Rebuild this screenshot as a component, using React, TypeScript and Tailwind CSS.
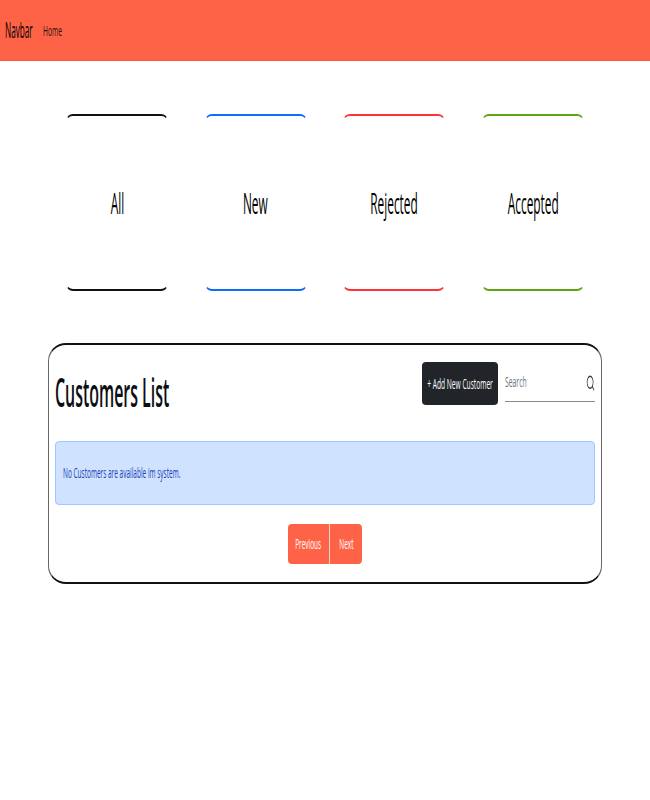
import { Search } from "lucide-react";

const cards = [
  { label: "All", color: "border-y-[#111111]" },
  { label: "New", color: "border-y-[#0d6efd]" },
  { label: "Rejected", color: "border-y-[#ff3333]" },
  { label: "Accepted", color: "border-y-[#5fa50f]" },
];

export default function App() {
  return (
    <div className="min-h-[800px] bg-white font-['Open_Sans',sans-serif] text-black">
      {/* Navbar */}
      <nav className="flex h-[61px] items-center border-b border-[#ff5533] bg-[#ff6347] pl-[5px]">
        <span className="inline-block w-[28px] origin-left scale-x-[0.39] text-[21px] leading-none whitespace-nowrap">Navbar</span>
        <span className="ml-[10px] inline-block w-[18px] origin-left scale-x-[0.446] text-[15px] leading-none whitespace-nowrap text-[#2a1410]">Home</span>
      </nav>

      {/* Status cards */}
      <div className="mt-[53px] grid grid-cols-4 gap-x-[36.5px] px-[66px]">
        {cards.map((card) => (
          <div
            key={card.label}
            className={`flex h-[177px] items-center justify-center rounded-[7px] border-x border-y-[2px] border-x-transparent ${card.color}`}
          >
            <span className="inline-block scale-x-[0.41] text-[29px] leading-none whitespace-nowrap">{card.label}</span>
          </div>
        ))}
      </div>

      {/* Customers panel */}
      <div className="mx-[48px] mt-[52px] h-[241px] rounded-[18px] border-x border-y-[2px] border-x-[#666666] border-y-[#111111] px-[6px]">
        <div className="flex h-[59px] items-start justify-between">
          <h1 className="mt-[26px] origin-left scale-x-[0.398] text-[40px] leading-[42px] font-semibold whitespace-nowrap text-[#0c0f14]">Customers List</h1>
          <div className="flex">
            <button className="mt-[17px] flex h-[43px] w-[76px] items-center justify-center rounded-[4px] bg-[#212529] text-white">
              <span className="inline-block scale-x-[0.443] text-[15px] leading-none whitespace-nowrap">+ Add New Customer</span>
            </button>
            <div className="mt-[17px] ml-[7px] flex h-[40px] w-[90px] items-center justify-between border-b border-[#8a8a8a] pr-0">
              <span className="inline-block w-[22px] origin-left scale-x-[0.487] text-[14px] leading-none whitespace-nowrap text-[#6c7380]">Search</span>
              <Search className="mt-[2px] h-[18px] w-[9px] text-[#333333]" strokeWidth={1.8} preserveAspectRatio="none" />
            </div>
          </div>
        </div>

        <div className="mt-[37px] flex h-[64px] items-center rounded-[4px] border border-[#a0c6ff] bg-[#cfe2ff] px-[7px]">
          <span className="inline-block origin-left scale-x-[0.464] text-[14px] leading-none whitespace-nowrap text-[#1a3fb8]">No Customers are available im system.</span>
        </div>

        <div className="mt-[19px] flex justify-center">
          <button className="flex h-[40px] w-[42px] items-center justify-center rounded-l-[4px] border-r border-[#f3d5cf] bg-[#ff6347] text-white">
            <span className="inline-block scale-x-[0.46] text-[14px] leading-none">Previous</span>
          </button>
          <button className="flex h-[40px] w-[32px] items-center justify-center rounded-r-[4px] bg-[#ff6347] text-white">
            <span className="inline-block scale-x-[0.46] text-[14px] leading-none">Next</span>
          </button>
        </div>
      </div>
    </div>
  );
}
